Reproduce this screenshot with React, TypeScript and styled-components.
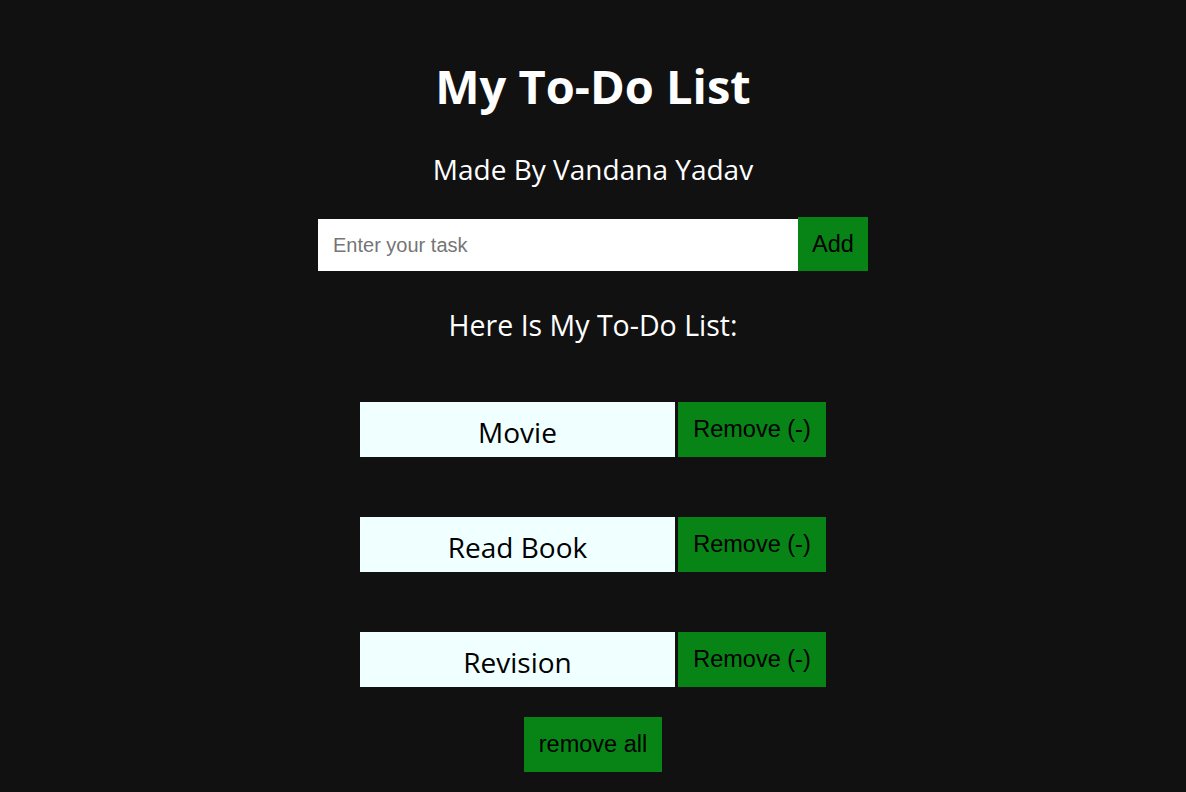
import React from "react";
import styled, { createGlobalStyle } from "styled-components";

const Global = createGlobalStyle`
  html, body { margin: 0; padding: 0; background: #111111; }
  body { font-family: "Open Sans", "Noto Sans", sans-serif; }
`;

const Page = styled.div`
  min-height: 792px;
  background: #111111;
  display: flex;
  flex-direction: column;
  align-items: center;
  padding-top: 58px;
  box-sizing: border-box;
`;

const Title = styled.h1`
  margin: 0;
  height: 56px;
  line-height: 56px;
  font-size: 47px;
  font-weight: 700;
  color: #ffffff;
`;

const Subtitle = styled.h2`
  margin: 37px 0 0;
  height: 36px;
  line-height: 36px;
  font-size: 28px;
  font-weight: 400;
  color: #ffffff;
`;

const Form = styled.div`
  margin-top: 30px;
  display: flex;
  align-items: flex-end;
`;

const Input = styled.input`
  width: 480px;
  height: 52px;
  box-sizing: border-box;
  border: none;
  outline: none;
  padding: 0 15px;
  font-family: "Liberation Sans", Arial, sans-serif;
  font-size: 20px;
  color: #111;
  background: #ffffff;
  &::placeholder { color: #757575; }
`;

const GreenButton = styled.button<{ $w: number; $h: number }>`
  width: ${(p) => p.$w}px;
  height: ${(p) => p.$h}px;
  border: none;
  padding: 0;
  background: #078415;
  color: #000000;
  font-family: "Liberation Sans", Arial, sans-serif;
  font-size: 23.5px;
  cursor: pointer;
`;

const ListHeading = styled.h3`
  margin: 36px 0 0;
  height: 36px;
  line-height: 36px;
  font-size: 28.5px;
  font-weight: 400;
  color: #ffffff;
`;

const List = styled.ul`
  list-style: none;
  margin: 59px 0 0;
  padding: 0;
  display: flex;
  flex-direction: column;
  gap: 60px;
`;

const Row = styled.li`
  display: flex;
  gap: 3px;
`;

const Item = styled.div`
  width: 315px;
  height: 55px;
  background: #f0ffff;
  color: #000;
  display: flex;
  align-items: center;
  justify-content: center;
  font-size: 28px;
  padding-top: 4px;
  box-sizing: border-box;
`;

const Footer = styled.div`
  margin-top: 30px;
`;

const tasks = ["Movie", "Read Book", "Revision"];

export default function App() {
  return (
    <>
      <Global />
      <Page>
        <Title>My To-Do List</Title>
        <Subtitle>Made By Vandana Yadav</Subtitle>
        <Form>
          <Input placeholder="Enter your task" />
          <GreenButton $w={70} $h={54}>Add</GreenButton>
        </Form>
        <ListHeading>Here Is My To-Do List:</ListHeading>
        <List>
          {tasks.map((t) => (
            <Row key={t}>
              <Item>{t}</Item>
              <GreenButton $w={148} $h={55}>Remove (-)</GreenButton>
            </Row>
          ))}
        </List>
        <Footer>
          <GreenButton $w={138} $h={55}>remove all</GreenButton>
        </Footer>
      </Page>
    </>
  );
}
